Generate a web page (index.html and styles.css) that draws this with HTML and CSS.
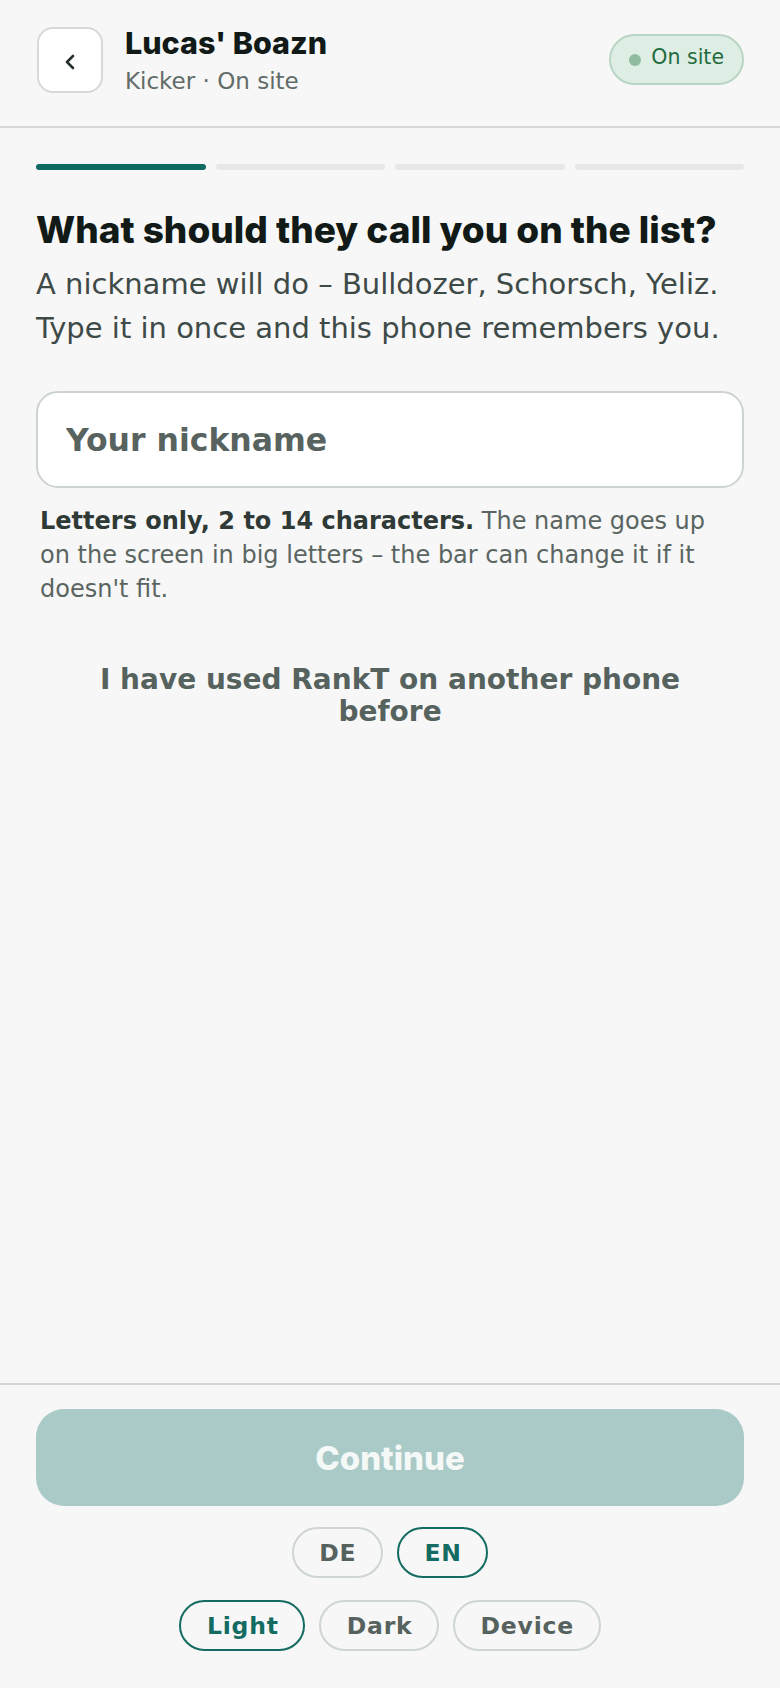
FILE: index.html
```html
<!DOCTYPE html>
<html lang="en">
<head>
<meta charset="utf-8">
<title>RankT – Nickname</title>
<link rel="stylesheet" href="styles.css">
</head>
<body>
<div class="page">
  <header class="topbar">
    <button class="back" aria-label="Back">
      <svg width="20" height="20" viewBox="0 0 20 20" aria-hidden="true"><path d="M13 4 L7 10 L13 16" fill="none" stroke="#25302d" stroke-width="2.6" stroke-linecap="round" stroke-linejoin="round"/></svg>
    </button>
    <div class="venue">
      <div class="venue-name">Lucas' Boazn</div>
      <div class="venue-meta">Kicker · On site</div>
    </div>
    <div class="badge"><span class="dot"></span><span class="badge-text">On site</span></div>
  </header>

  <main class="content">
    <div class="steps">
      <span class="step active"></span>
      <span class="step"></span>
      <span class="step"></span>
      <span class="step"></span>
    </div>
    <h1 class="title">What should they call you on the list?</h1>
    <p class="lead">A nickname will do – Bulldozer, Schorsch, Yeliz. Type it in once and this phone remembers you.</p>
    <input class="nick" type="text" placeholder="Your nickname">
    <p class="hint"><strong>Letters only, 2 to 14 characters.</strong> The name goes up on the screen in big letters – the bar can change it if it doesn't fit.</p>
    <button class="link">I have used RankT on another phone before</button>
  </main>

  <footer class="bottom">
    <button class="continue" disabled>Continue</button>
    <div class="pills">
      <button class="pill">DE</button>
      <button class="pill on">EN</button>
    </div>
    <div class="pills">
      <button class="pill on">Light</button>
      <button class="pill">Dark</button>
      <button class="pill">Device</button>
    </div>
  </footer>
</div>
</body>
</html>
```
FILE: styles.css
```css
* { box-sizing: border-box; }
html, body { margin: 0; padding: 0; }
body {
  background: #f6f7f6;
  font-family: "DejaVu Sans", sans-serif;
  color: #111a17;
}
.page {
  min-height: 100vh;
  display: flex;
  flex-direction: column;
}
button { font-family: inherit; }

.topbar {
  display: flex;
  align-items: flex-start;
  padding: 27px 36px 31px 37px;
  border-bottom: 2px solid #d4d9d7;
}
.back {
  width: 66px;
  height: 66px;
  flex: none;
  border: 2px solid #d5d9d8;
  border-radius: 16px;
  background: #ffffff;
  display: flex;
  align-items: center;
  justify-content: center;
  padding: 0;
  padding-top: 3px;
}
.venue {
  margin-left: 22px;
  flex: 1;
}
.venue-name {
  font-family: Inter, "Liberation Sans", sans-serif;
  font-weight: 800;
  font-size: 30.5px;
  line-height: 32px;
  color: #111a17;
}
.venue-meta {
  margin-top: 8px;
  font-size: 23px;
  line-height: 28px;
  color: #626c69;
}
.badge {
  margin-top: 7px;
  height: 51px;
  display: flex;
  align-items: center;
  padding: 0 18px 0 18px;
  border: 2px solid #b9d5c4;
  border-radius: 26px;
  background: #dfeee5;
}
.dot {
  width: 12px;
  height: 12px;
  border-radius: 50%;
  background: #8fbc9f;
  margin-right: 10px;
}
.badge-text {
  font-size: 20.5px;
  line-height: 24px;
  color: #1f6b3e;
  padding-bottom: 6px;
}

.content {
  flex: 1;
  padding: 36px 36px 0 36px;
  display: flex;
  flex-direction: column;
}
.steps {
  display: grid;
  grid-template-columns: repeat(4, 1fr);
  gap: 10px;
}
.step {
  height: 6px;
  border-radius: 3px;
  background: #e7e8e8;
}
.step.active { background: #0f6b62; }

.title {
  margin: 37px 0 0 0;
  font-family: Inter, "Liberation Sans", sans-serif;
  font-weight: 800;
  font-size: 37px;
  line-height: 45px;
  letter-spacing: 0;
  color: #111a17;
}
.lead {
  margin: 11px 0 0 0;
  font-size: 29px;
  line-height: 43.5px;
  color: #3e4a47;
}
.nick {
  margin-top: 41px;
  width: 100%;
  height: 97px;
  border: 2px solid #ccd3d0;
  border-radius: 22px;
  background: #ffffff;
  padding: 0 28px;
  font-family: "DejaVu Sans", sans-serif;
  font-weight: 700;
  font-size: 31.5px;
  color: #2b3532;
  outline: none;
}
.nick::placeholder { color: #58635f; opacity: 1; }
.hint {
  margin: 16px 0 0 0;
  padding: 0 8px 0 4px;
  font-size: 24px;
  line-height: 34px;
  color: #5a6562;
}
.hint strong { color: #2f3936; font-weight: 700; }
.link {
  margin: 42px auto 0 auto;
  padding: 16px 16px;
  border: none;
  background: transparent;
  font-weight: 700;
  font-size: 28px;
  line-height: 32px;
  color: #56625e;
  text-align: center;
  max-width: 100%;
}

.bottom {
  border-top: 2px solid #d3d8d6;
  padding: 24px 36px 37px 36px;
  display: flex;
  flex-direction: column;
  align-items: center;
}
.continue {
  width: 100%;
  height: 97px;
  border: none;
  border-radius: 28px;
  background: #aacac7;
  color: #f4f8f7;
  font-family: Inter, "Liberation Sans", sans-serif;
  font-weight: 800;
  font-size: 33px;
}
.pills {
  display: flex;
  gap: 14px;
  margin-top: 21px;
}
.pills + .pills { margin-top: 22px; }
.pill {
  height: 51px;
  padding: 0 24.5px 0 25.5px;
  border: 2px solid #cfd5d3;
  border-radius: 26px;
  background: transparent;
  font-weight: 700;
  font-size: 23.5px;
  letter-spacing: 0.8px;
  color: #56625e;
}
.pill.on {
  border-color: #136b62;
  color: #136b62;
}
```
